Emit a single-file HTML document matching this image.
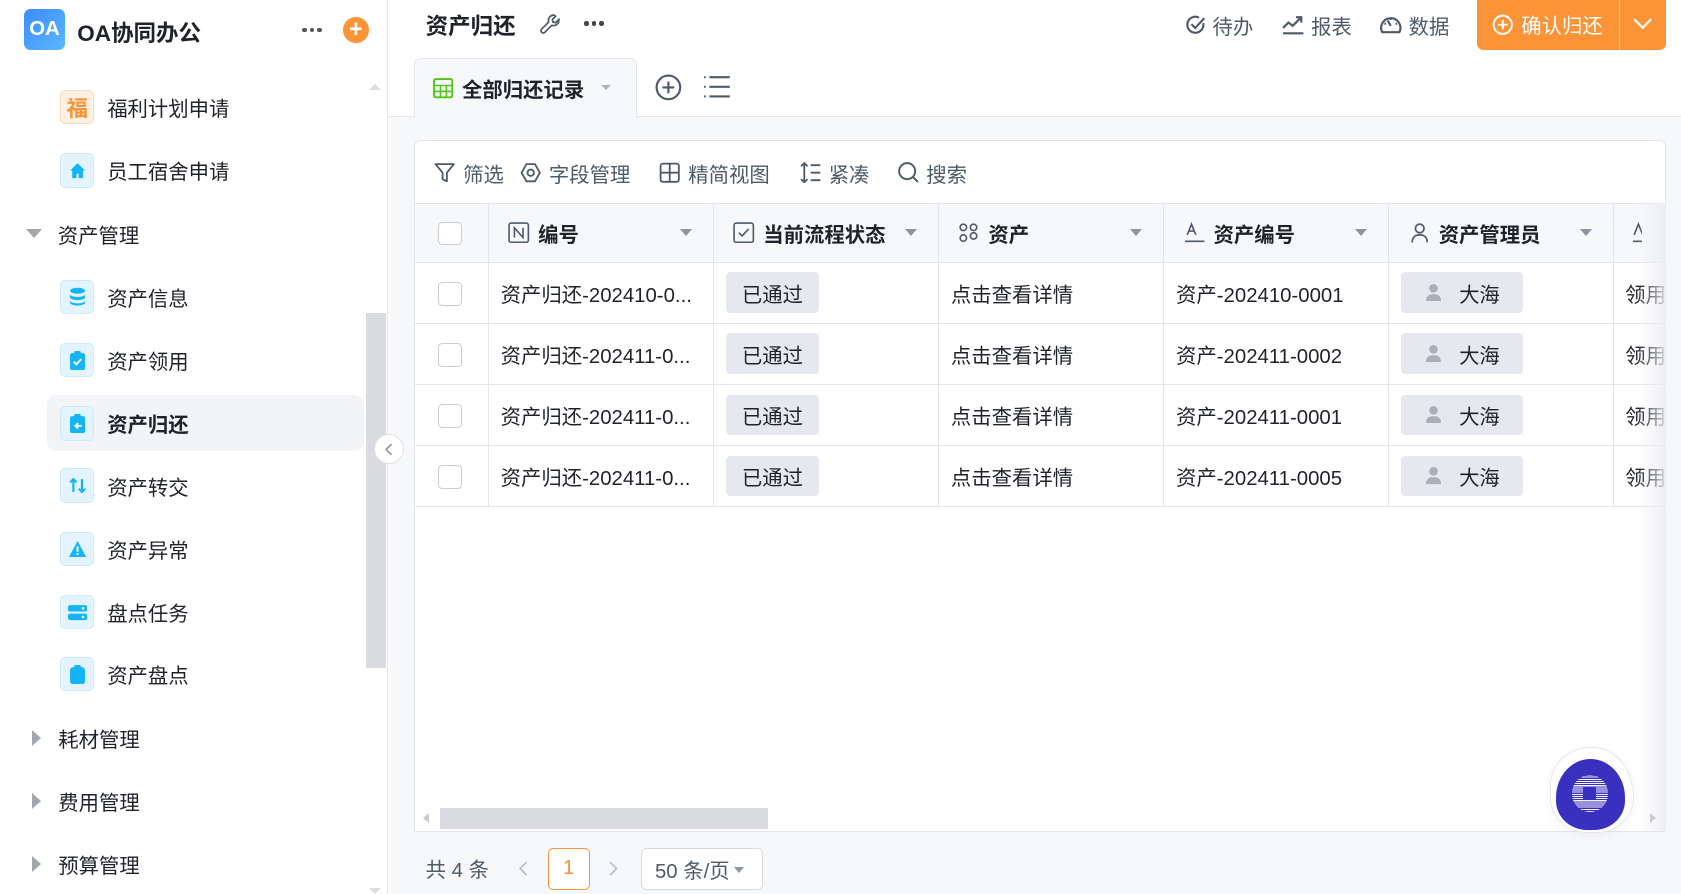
<!DOCTYPE html>
<html><head><meta charset="utf-8"><style>
*{box-sizing:border-box;margin:0;padding:0}
html,body{width:1681px;height:894px;overflow:hidden;background:#fff}
#z{zoom:1.07207;width:1568px;height:834px;position:relative;font-family:"Liberation Sans","Noto Sans CJK SC",sans-serif;color:#1f2329}
.a{position:absolute}
.side{left:0;top:0;width:362px;height:834px;border-right:1px solid #e5e6eb;background:#fff}
.mi{position:absolute;left:56px;height:32px;display:flex;align-items:center;font-size:19px;color:#1f2329}
.ib{width:32px;height:32px;border-radius:5px;background:#e3f4fe;border:1px solid #cdeafc;margin-right:12px;display:flex;align-items:center;justify-content:center}
.grp{position:absolute;left:24px;font-size:19px;display:flex;align-items:center;height:30px}
.tri{width:0;height:0;margin-right:17px}
.tb{font-size:19px;color:#4e5969;display:flex;align-items:center;position:absolute;top:147px}
.col{position:absolute;top:189px;height:283px;border-left:1px solid #e5e6eb}
.hd{position:absolute;top:189px;height:56px;display:flex;align-items:center;font-size:19px;font-weight:bold}
.row{position:absolute;left:387px;width:1166px;height:57px;border-bottom:1px solid #e5e6eb}
.cell{position:absolute;font-size:19px;color:#1f2329}
.tag{position:absolute;width:87px;height:38px;background:#e5e8ef;border-radius:4px;font-size:19px;display:flex;align-items:center;justify-content:center}
.usr{position:absolute;width:114px;height:38px;background:#e5e8ef;border-radius:4px;font-size:19px;display:flex;align-items:center;padding-left:54px}
.cb{position:absolute;left:409px;width:22px;height:22px;border:1px solid #c9cdd4;border-radius:4px;background:#fff}
.dd{position:absolute;width:0;height:0;border-left:6px solid transparent;border-right:6px solid transparent;border-top:7px solid #8f959e}
</style></head><body><div id="z">
<div class="a side">
 <div class="a" style="left:22px;top:8px;width:39px;height:39px;border-radius:6px;background:linear-gradient(135deg,#3d8bfd,#5ab8ff);color:#fff;font-weight:bold;font-size:19px;display:flex;align-items:center;justify-content:center">OA</div>
 <div class="a" style="left:72px;top:15px;font-size:21px;font-weight:bold">OA协同办公</div>
 <div class="a" style="left:282px;top:26px;font-size:0"><span style="display:inline-block;width:4px;height:4px;border-radius:2px;background:#555;margin-right:3px"></span><span style="display:inline-block;width:4px;height:4px;border-radius:2px;background:#555;margin-right:3px"></span><span style="display:inline-block;width:4px;height:4px;border-radius:2px;background:#555"></span></div>
 <div class="a" style="left:320px;top:16px;width:24px;height:24px;border-radius:12px;background:#fb9337;color:#fff;font-size:22px;line-height:23px;text-align:center;font-weight:bold">+</div>
 <div class="a" style="left:344px;top:78px;border-left:6px solid transparent;border-right:6px solid transparent;border-bottom:6px solid #dcdde0"></div>
 <div class="a" style="left:44px;top:368px;width:296px;height:53px;background:#f3f4f7;border-radius:9px"></div>
 <div class="a" style="left:341px;top:292px;width:19px;height:331px;background:#dadbde"></div>
 <div class="mi" style="top:84px"><div class="ib" style="background:#fff0e4;border-color:#fddcc0;color:#fb9337;font-weight:bold;font-size:20px">福</div>福利计划申请</div>
 <div class="mi" style="top:143px"><div class="ib"><svg width="16" height="16" viewBox="0 0 16 16"><path d="M8 1L1 8h2v7h4v-4h2v4h4V8h2z" fill="#14b4f5"/></svg></div>员工宿舍申请</div>
 <div class="grp" style="top:203px"><div class="tri" style="border-left:8px solid transparent;border-right:8px solid transparent;border-top:9px solid #a2a6ad"></div><span style="margin-left:-2px">资产管理</span></div>
 <div class="mi" style="top:261px"><div class="ib"><svg width="16" height="18" viewBox="0 0 16 18"><ellipse cx="8" cy="3.5" rx="7" ry="2.8" fill="#14b4f5"/><path d="M1 6.5c0 1.6 3 2.8 7 2.8s7-1.2 7-2.8v3c0 1.6-3 2.8-7 2.8s-7-1.2-7-2.8zM1 12.5c0 1.6 3 2.8 7 2.8s7-1.2 7-2.8v2c0 1.6-3 2.8-7 2.8s-7-1.2-7-2.8z" fill="#14b4f5"/></svg></div>资产信息</div>
 <div class="mi" style="top:320px"><div class="ib"><svg width="14" height="18" viewBox="0 0 14 18"><rect x="0" y="2" width="14" height="16" rx="2" fill="#14b4f5"/><rect x="4" y="0" width="6" height="4" rx="1" fill="#14b4f5"/><path d="M3.5 10l2.5 2.5 4.5-5" stroke="#fff" stroke-width="1.8" fill="none"/></svg></div>资产领用</div>
 <div class="mi" style="top:379px;font-weight:bold"><div class="ib"><svg width="14" height="18" viewBox="0 0 14 18"><rect x="0" y="2" width="14" height="16" rx="2" fill="#14b4f5"/><rect x="4" y="0" width="6" height="4" rx="1" fill="#14b4f5"/><path d="M11 11H5M7.5 8.5L5 11l2.5 2.5" stroke="#fff" stroke-width="1.8" fill="none"/></svg></div>资产归还</div>
 <div class="mi" style="top:437px"><div class="ib"><svg width="18" height="16" viewBox="0 0 18 16"><path d="M5 14V2M2 5l3-3 3 3M13 2v12M10 11l3 3 3-3" stroke="#14b4f5" stroke-width="2" fill="none"/></svg></div>资产转交</div>
 <div class="mi" style="top:496px"><div class="ib"><svg width="16" height="15" viewBox="0 0 16 15"><path d="M8 0L16 15H0z" fill="#14b4f5"/><rect x="7.1" y="5" width="1.8" height="5" fill="#fff"/><rect x="7.1" y="11.2" width="1.8" height="1.8" fill="#fff"/></svg></div>资产异常</div>
 <div class="mi" style="top:555px"><div class="ib"><svg width="18" height="16" viewBox="0 0 18 16"><rect x="0" y="1" width="18" height="6" rx="2" fill="#14b4f5"/><rect x="0" y="9" width="18" height="6" rx="2" fill="#14b4f5"/><circle cx="14" cy="4" r="1.2" fill="#fff"/><circle cx="14" cy="12" r="1.2" fill="#fff"/></svg></div>盘点任务</div>
 <div class="mi" style="top:613px"><div class="ib"><svg width="14" height="18" viewBox="0 0 14 18"><rect x="0" y="2" width="14" height="16" rx="3" fill="#14b4f5"/><rect x="4" y="0" width="6" height="4" rx="1" fill="#14b4f5"/></svg></div>资产盘点</div>
 <div class="grp" style="top:673px"><div class="tri" style="margin-left:6px;border-top:8px solid transparent;border-bottom:8px solid transparent;border-left:9px solid #a2a6ad;margin-right:16px"></div>耗材管理</div>
 <div class="grp" style="top:732px"><div class="tri" style="margin-left:6px;border-top:8px solid transparent;border-bottom:8px solid transparent;border-left:9px solid #a2a6ad;margin-right:16px"></div>费用管理</div>
 <div class="grp" style="top:791px"><div class="tri" style="margin-left:6px;border-top:8px solid transparent;border-bottom:8px solid transparent;border-left:9px solid #a2a6ad;margin-right:16px"></div>预算管理</div>
 <div class="a" style="left:344px;top:828px;border-left:6px solid transparent;border-right:6px solid transparent;border-top:6px solid #dcdde0"></div>
</div>
<div class="a" style="left:349px;top:405px;width:28px;height:28px;border-radius:14px;background:#fff;border:1px solid #dfe1e5;z-index:3;display:flex;align-items:center;justify-content:center"><svg width="10" height="12" viewBox="0 0 10 12"><path d="M7 1L2 6l5 5" stroke="#8f959e" stroke-width="1.5" fill="none"/></svg></div>

<div class="a" style="left:397px;top:8px;font-size:21px;font-weight:bold">资产归还</div>
<svg class="a" style="left:503px;top:12px" width="22" height="22" viewBox="0 0 22 22"><path d="M14 2a5 5 0 0 0-5 6.5L2.5 15a2 2 0 0 0 3 3L12 11.5A5 5 0 0 0 18.5 6l-3 3-2.5-.5-.5-2.5 3-3A5 5 0 0 0 14 2z" stroke="#4e5969" stroke-width="1.6" fill="none"/></svg>
<div class="a" style="left:545px;top:20px;font-size:0"><span style="display:inline-block;width:4px;height:4px;border-radius:2px;background:#444;margin-right:3px"></span><span style="display:inline-block;width:4px;height:4px;border-radius:2px;background:#444;margin-right:3px"></span><span style="display:inline-block;width:4px;height:4px;border-radius:2px;background:#444"></span></div>
<div class="a" style="left:1105px;top:9px;font-size:19px;color:#4e5969;display:flex;align-items:center"><svg width="20" height="20" viewBox="0 0 20 20" style="margin-right:6px"><path d="M17 8.5A7.5 7.5 0 1 1 13 3.3" stroke="#4e5969" stroke-width="2" fill="none"/><path d="M6 9.5l3.5 3.5L18 4" stroke="#4e5969" stroke-width="2" fill="none"/></svg>待办</div>
<div class="a" style="left:1196px;top:9px;font-size:19px;color:#4e5969;display:flex;align-items:center"><svg width="21" height="20" viewBox="0 0 21 20" style="margin-right:6px"><path d="M1 13l5-5 4 3 8-8M13 3h5v5M1 18h19" stroke="#4e5969" stroke-width="2" fill="none"/></svg>报表</div>
<div class="a" style="left:1286px;top:9px;font-size:19px;color:#4e5969;display:flex;align-items:center"><svg width="22" height="20" viewBox="0 0 22 20" style="margin-right:6px"><path d="M3 17A9 9 0 1 1 19 17z" stroke="#4e5969" stroke-width="2" fill="none"/><path d="M11 11L8 6M11 4v1.5M5 9h1.5M17 9h-1.5" stroke="#4e5969" stroke-width="2"/></svg>数据</div>
<div class="a" style="left:1378px;top:0;width:176px;height:47px;background:#fb9337;border-radius:0 0 6px 6px;color:#fff;font-size:19px">
 <svg class="a" style="left:14px;top:13px" width="20" height="20" viewBox="0 0 20 20"><circle cx="10" cy="10" r="8.5" stroke="#fff" stroke-width="1.8" fill="none"/><path d="M10 5.5v9M5.5 10h9" stroke="#fff" stroke-width="1.8"/></svg>
 <span class="a" style="left:41px;top:8px">确认归还</span>
 <div class="a" style="left:132px;top:0;width:1px;height:47px;background:#fdd0a8"></div>
 <svg class="a" style="left:145px;top:16px" width="18" height="12" viewBox="0 0 18 12"><path d="M1 2l8 8 8-8" stroke="#fff" stroke-width="2" fill="none"/></svg>
</div>
<div class="a" style="left:363px;top:108px;width:1205px;height:726px;background:#f7f8fa;border-top:1px solid #e5e6eb"></div>
<div class="a" style="left:386px;top:54px;width:208px;height:56px;background:#f7f8fa;border:1px solid #e5e6eb;border-bottom:none;border-radius:6px 6px 0 0"></div>
<svg class="a" style="left:404px;top:73px" width="19" height="19" viewBox="0 0 19 19"><rect x="1" y="1" width="17" height="17" rx="1.5" stroke="#52c41a" stroke-width="1.8" fill="none"/><path d="M1 7h17M1 12.5h17M7 7v11M12.5 7v11" stroke="#52c41a" stroke-width="1.5"/></svg>
<div class="a" style="left:431px;top:68px;font-size:19px;font-weight:bold">全部归还记录</div>
<div class="dd" style="left:561px;top:79px;border-left-width:5px;border-right-width:5px;border-top:5px solid #b0b4ba"></div>
<svg class="a" style="left:611px;top:69px" width="25" height="25" viewBox="0 0 25 25"><circle cx="12.5" cy="12.5" r="11" stroke="#4e5969" stroke-width="2" fill="none"/><path d="M12.5 7v11M7 12.5h11" stroke="#4e5969" stroke-width="2"/></svg>
<svg class="a" style="left:656px;top:70px" width="26" height="22" viewBox="0 0 26 22"><path d="M6 2h19M6 11h19M6 20h19" stroke="#4e5969" stroke-width="2"/><path d="M1 2h1.5M1 11h1.5M1 20h1.5" stroke="#4e5969" stroke-width="2"/></svg>
<div class="a" style="left:386px;top:131px;width:1168px;height:645px;background:#fff;border:1px solid #e5e6eb;border-radius:6px 6px 0 0"></div>
<div class="tb" style="left:405px"><svg width="20" height="20" viewBox="0 0 20 20" style="margin-right:7px"><path d="M1.5 2h17l-6.5 8v8l-4-2v-6z" stroke="#4e5969" stroke-width="1.7" fill="none" stroke-linejoin="round"/></svg>筛选</div>
<div class="tb" style="left:485px"><svg width="20" height="20" viewBox="0 0 20 20" style="margin-right:7px"><path d="M6 2h8l4.5 8-4.5 8H6L1.5 10z" stroke="#4e5969" stroke-width="1.7" fill="none"/><circle cx="10" cy="10" r="3" stroke="#4e5969" stroke-width="1.7" fill="none"/></svg>字段管理</div>
<div class="tb" style="left:615px"><svg width="20" height="20" viewBox="0 0 20 20" style="margin-right:7px"><rect x="1.5" y="1.5" width="17" height="17" rx="2" stroke="#4e5969" stroke-width="1.7" fill="none"/><path d="M10 1.5v17M1.5 10h17" stroke="#4e5969" stroke-width="1.7"/></svg>精简视图</div>
<div class="tb" style="left:746px"><svg width="20" height="20" viewBox="0 0 20 20" style="margin-right:7px"><path d="M4 1v18M1 4l3-3 3 3M1 16l3 3 3-3M10 3h9M10 10h9M10 17h9" stroke="#4e5969" stroke-width="1.7" fill="none"/></svg>紧凑</div>
<div class="tb" style="left:837px"><svg width="21" height="21" viewBox="0 0 21 21" style="margin-right:6px"><circle cx="9.5" cy="9.5" r="7.5" stroke="#4e5969" stroke-width="1.8" fill="none"/><path d="M15 15l4.5 4.5" stroke="#4e5969" stroke-width="1.8"/></svg>搜索</div>
<div class="a" style="left:387px;top:189px;width:1166px;height:56px;background:#f7f8fa;border-top:1px solid #e5e6eb;border-bottom:1px solid #e5e6eb"></div>
<div class="row" style="top:245px"></div><div class="row" style="top:302px"></div><div class="row" style="top:359px"></div><div class="row" style="top:416px"></div>
<div class="col" style="left:455px"></div><div class="col" style="left:665px"></div><div class="col" style="left:875px"></div><div class="col" style="left:1085px"></div><div class="col" style="left:1295px"></div><div class="col" style="left:1505px"></div>
<div class="cb" style="top:207px"></div><div class="cb" style="top:263px"></div><div class="cb" style="top:320px"></div><div class="cb" style="top:377px"></div><div class="cb" style="top:434px"></div>
<div class="hd" style="left:474px"><svg width="20" height="20" viewBox="0 0 20 20" style="margin-right:8px"><rect x="1" y="1" width="18" height="18" rx="2" stroke="#4e5969" stroke-width="1.5" fill="none"/><path d="M6 14.5V5.5l8 9V5.5" stroke="#4e5969" stroke-width="1.5" fill="none"/></svg>编号</div>
<div class="hd" style="left:684px"><svg width="20" height="20" viewBox="0 0 20 20" style="margin-right:8px"><rect x="1" y="1" width="18" height="18" rx="2" stroke="#4e5969" stroke-width="1.5" fill="none"/><path d="M5.5 10l3 3 6-6.5" stroke="#4e5969" stroke-width="1.5" fill="none"/></svg>当前流程状态</div>
<div class="hd" style="left:894px"><svg width="20" height="20" viewBox="0 0 20 20" style="margin-right:8px"><circle cx="5" cy="5" r="3" stroke="#4e5969" stroke-width="1.5" fill="none"/><circle cx="14.5" cy="5" r="3" stroke="#4e5969" stroke-width="1.5" fill="none"/><circle cx="5" cy="15" r="3" stroke="#4e5969" stroke-width="1.5" fill="none"/><circle cx="14.5" cy="13" r="3" stroke="#4e5969" stroke-width="1.5" fill="none"/></svg>资产</div>
<div class="hd" style="left:1104px"><svg width="20" height="20" viewBox="0 0 20 20" style="margin-right:8px"><path d="M3 12L7 2l4 10M4.5 8.5h5M1 18h18" stroke="#4e5969" stroke-width="1.5" fill="none"/></svg>资产编号</div>
<div class="hd" style="left:1314px"><svg width="20" height="20" viewBox="0 0 20 20" style="margin-right:8px"><circle cx="10" cy="6" r="4" stroke="#4e5969" stroke-width="1.6" fill="none"/><path d="M3 19c0-5 3-7 7-7s7 2 7 7" stroke="#4e5969" stroke-width="1.6" fill="none"/></svg>资产管理员</div>
<svg class="a" style="left:1522px;top:207px" width="10" height="20" viewBox="0 0 10 20"><path d="M2 12L6 2l4 10M1 18h9" stroke="#4e5969" stroke-width="1.5" fill="none"/></svg>
<div class="dd" style="left:634px;top:214px"></div><div class="dd" style="left:844px;top:214px"></div><div class="dd" style="left:1054px;top:214px"></div><div class="dd" style="left:1264px;top:214px"></div><div class="dd" style="left:1474px;top:214px"></div>

<div class="cell" style="left:467px;top:259px">资产归还-202410-0...</div>
<div class="cell" style="left:467px;top:316px">资产归还-202411-0...</div>
<div class="cell" style="left:467px;top:373px">资产归还-202411-0...</div>
<div class="cell" style="left:467px;top:430px">资产归还-202411-0...</div>
<div class="tag" style="left:677px;top:254px">已通过</div><div class="tag" style="left:677px;top:311px">已通过</div><div class="tag" style="left:677px;top:368px">已通过</div><div class="tag" style="left:677px;top:425px">已通过</div>
<div class="cell" style="left:887px;top:259px">点击查看详情</div><div class="cell" style="left:887px;top:316px">点击查看详情</div><div class="cell" style="left:887px;top:373px">点击查看详情</div><div class="cell" style="left:887px;top:430px">点击查看详情</div>
<div class="cell" style="left:1097px;top:259px">资产-202410-0001</div><div class="cell" style="left:1097px;top:316px">资产-202411-0002</div><div class="cell" style="left:1097px;top:373px">资产-202411-0001</div><div class="cell" style="left:1097px;top:430px">资产-202411-0005</div>
<div class="usr" style="left:1307px;top:254px"><svg class="a" style="left:23px;top:11px" width="14" height="16" viewBox="0 0 14 16"><circle cx="7" cy="4" r="4" fill="#a9aeb8"/><path d="M0 16c0-5 3-6.5 7-6.5s7 1.5 7 6.5z" fill="#a9aeb8"/></svg>大海</div>
<div class="usr" style="left:1307px;top:311px"><svg class="a" style="left:23px;top:11px" width="14" height="16" viewBox="0 0 14 16"><circle cx="7" cy="4" r="4" fill="#a9aeb8"/><path d="M0 16c0-5 3-6.5 7-6.5s7 1.5 7 6.5z" fill="#a9aeb8"/></svg>大海</div>
<div class="usr" style="left:1307px;top:368px"><svg class="a" style="left:23px;top:11px" width="14" height="16" viewBox="0 0 14 16"><circle cx="7" cy="4" r="4" fill="#a9aeb8"/><path d="M0 16c0-5 3-6.5 7-6.5s7 1.5 7 6.5z" fill="#a9aeb8"/></svg>大海</div>
<div class="usr" style="left:1307px;top:425px"><svg class="a" style="left:23px;top:11px" width="14" height="16" viewBox="0 0 14 16"><circle cx="7" cy="4" r="4" fill="#a9aeb8"/><path d="M0 16c0-5 3-6.5 7-6.5s7 1.5 7 6.5z" fill="#a9aeb8"/></svg>大海</div>
<div class="cell" style="left:1516px;top:259px">领用</div><div class="cell" style="left:1516px;top:316px">领用</div><div class="cell" style="left:1516px;top:373px">领用</div><div class="cell" style="left:1516px;top:430px">领用</div>
<div class="a" style="left:1528px;top:189px;width:26px;height:586px;background:linear-gradient(90deg,rgba(240,241,244,0),rgba(236,237,241,.9))"></div>
<div class="a" style="left:395px;top:758px;border-top:5px solid transparent;border-bottom:5px solid transparent;border-right:6px solid #c9cbcf"></div>
<div class="a" style="left:410px;top:754px;width:306px;height:19px;background:#dadbde"></div>
<div class="a" style="left:1539px;top:758px;border-top:5px solid transparent;border-bottom:5px solid transparent;border-left:6px solid #c9cbcf"></div>
<div class="a" style="left:386px;top:775px;width:1168px;height:1px;background:#e5e6eb"></div>
<div class="a" style="left:397px;top:796px;font-size:19px;color:#4e5969">共 4 条</div>
<svg class="a" style="left:483px;top:802px" width="10" height="16" viewBox="0 0 10 16"><path d="M8 2L2 8l6 6" stroke="#b8bcc3" stroke-width="1.5" fill="none"/></svg>
<div class="a" style="left:511px;top:791px;width:39px;height:39px;border:1px solid #fb9337;border-radius:5px;background:#fff;color:#fb9337;font-size:19px;display:flex;align-items:center;justify-content:center">1</div>
<svg class="a" style="left:567px;top:802px" width="10" height="16" viewBox="0 0 10 16"><path d="M2 2l6 6-6 6" stroke="#b8bcc3" stroke-width="1.5" fill="none"/></svg>
<div class="a" style="left:598px;top:791px;width:114px;height:39px;border:1px solid #d6d9de;border-radius:5px;background:#fff;color:#4e5969;font-size:19px;padding:5px 0 0 12px">50 条/页</div>
<div class="dd" style="left:685px;top:809px;border-left-width:5px;border-right-width:5px;border-top:6px solid #8f959e"></div>
<div class="a" style="left:1446px;top:697px;width:78px;height:80px;background:#fff;border:1px solid #e7e8ec;border-radius:50% 50% 46% 46%/45% 60% 42% 42%;box-shadow:0 2px 10px rgba(0,0,0,.05)"></div>
<div class="a" style="left:1451px;top:708px;width:65px;height:66px;background:#3a30c0;border-radius:50% 50% 45% 45%/55% 55% 42% 42%"></div>
<div class="a" style="left:1466px;top:723px;width:34px;height:34px;border-radius:50%;background:repeating-linear-gradient(0deg,transparent 0 1px,#3a30c0 1px 2px),#fff;opacity:.95"></div>
<div class="a" style="left:1477px;top:734px;width:12px;height:12px;background:#3a30c0"></div>
</div></body></html>
